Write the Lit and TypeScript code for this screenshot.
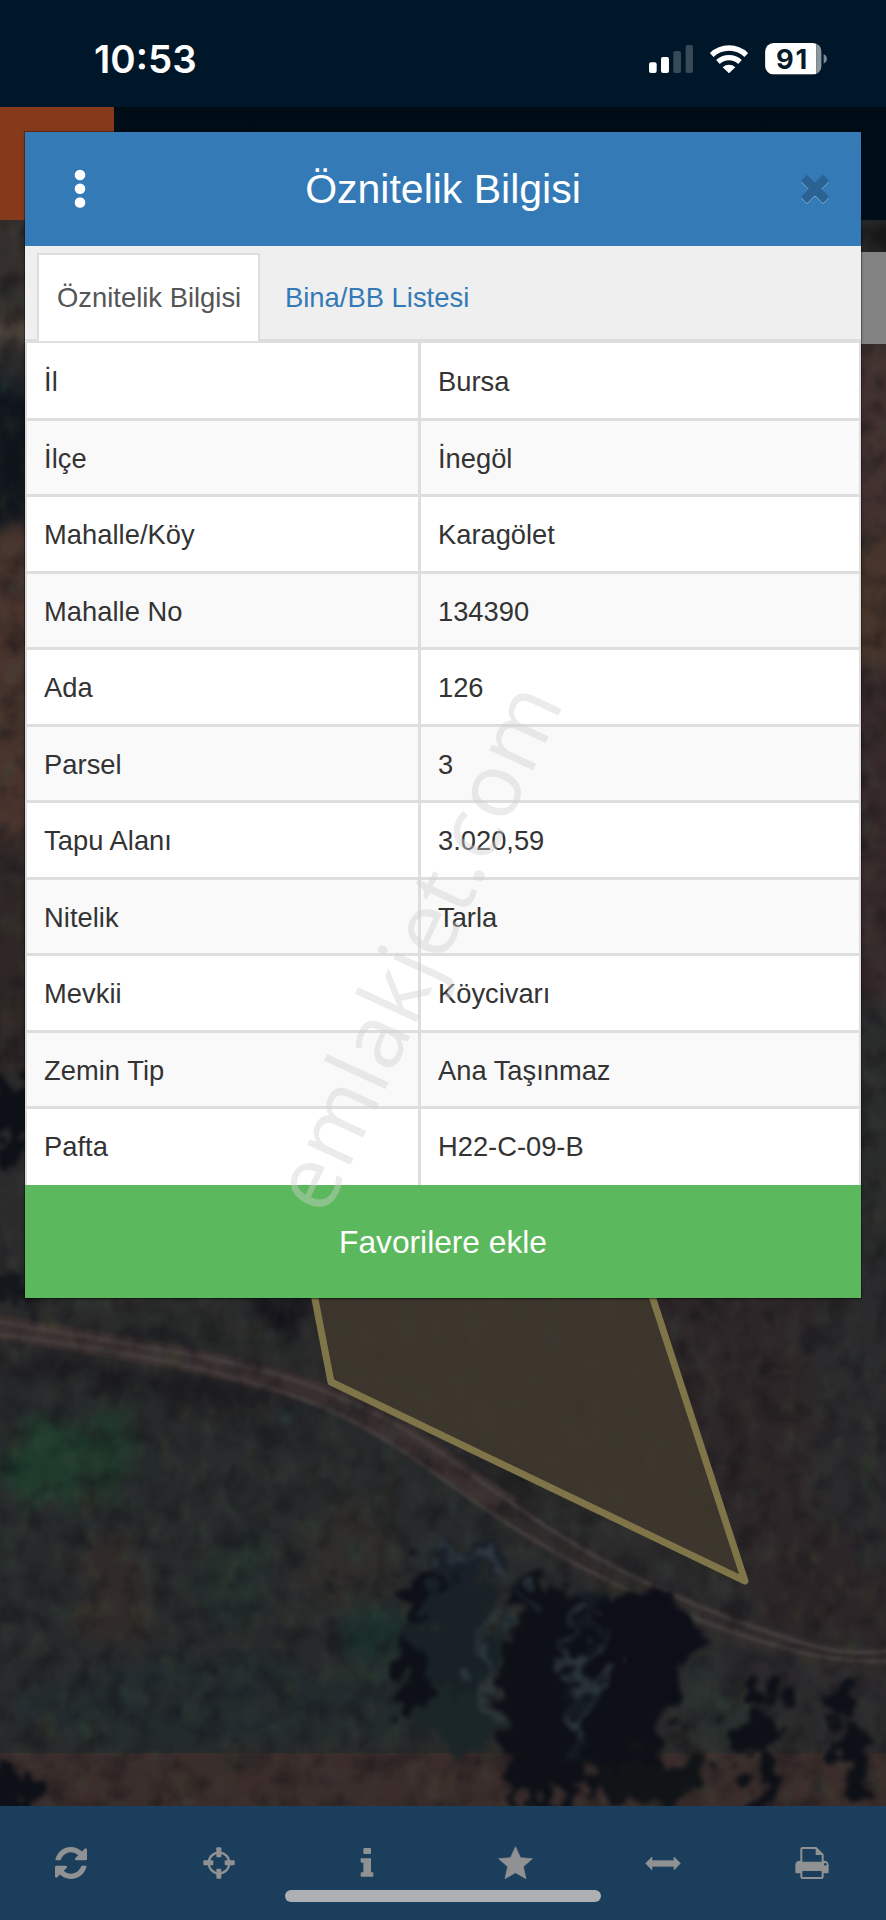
import { LitElement, html, css, svg } from 'lit';
import { customElement, property } from 'lit/decorators.js';

interface AttributeRow {
  label: string;
  value: string;
}

const ROWS: AttributeRow[] = [
  { label: 'İl', value: 'Bursa' },
  { label: 'İlçe', value: 'İnegöl' },
  { label: 'Mahalle/Köy', value: 'Karagölet' },
  { label: 'Mahalle No', value: '134390' },
  { label: 'Ada', value: '126' },
  { label: 'Parsel', value: '3' },
  { label: 'Tapu Alanı', value: '3.020,59' },
  { label: 'Nitelik', value: 'Tarla' },
  { label: 'Mevkii', value: 'Köycivarı' },
  { label: 'Zemin Tip', value: 'Ana Taşınmaz' },
  { label: 'Pafta', value: 'H22-C-09-B' },
];

@customElement('status-bar')
export class StatusBar extends LitElement {
  static styles = css`
    :host {
      display: flex;
      align-items: flex-start;
      justify-content: space-between;
      height: 107px;
      box-sizing: border-box;
      padding: 36px 59px 0 94px;
      background: #00172a;
      color: #fff;
      font-family: Inter, 'Liberation Sans', sans-serif;
    }
    .time {
      font-size: 38.5px;
      line-height: 46px;
      font-weight: 600;
      letter-spacing: 0;
    }
    .icons {
      display: flex;
      align-items: center;
      gap: 17px;
      padding-top: 7px;
    }
    svg {
      display: block;
    }
    .signal {
      margin-top: 1px;
    }
    .battery {
      font-weight: 700;
      font-size: 82px;
    }
  `;

  render() {
    return html`
      <span class="time">10:53</span>
      <div class="icons">
        <svg class="signal" width="44.3" height="28" viewBox="0 0 133 84">
          <rect x="0" y="52" width="23" height="32" rx="6" fill="#fff" />
          <rect x="36" y="36" width="24" height="48" rx="6" fill="#fff" />
          <rect x="73" y="18" width="23" height="66" rx="6" fill="#384957" />
          <rect x="110" y="0" width="22" height="84" rx="6" fill="#384957" />
        </svg>
        <svg width="38" height="28.3" viewBox="0 0 114 85">
          <g fill="none" stroke="#fff" stroke-width="16">
            <path d="M5 30 A75 75 0 0 1 109 30" />
            <path d="M24 51 A48 48 0 0 1 90 51" />
          </g>
          <path d="M57 85 L38 67 A28 28 0 0 1 76 67 Z" fill="#fff" />
        </svg>
        <svg class="battery" width="62" height="31.6" viewBox="0 0 186 95">
          <defs>
            <clipPath id="cell"><rect width="170" height="95" rx="26" /></clipPath>
          </defs>
          <g clip-path="url(#cell)">
            <rect width="154" height="95" fill="#fff" />
            <rect x="154" width="16" height="95" fill="#8d979f" />
          </g>
          <path d="M176 33 Q186 38 186 48 Q186 58 176 62 Z" fill="#7c8892" />
          <text x="80" y="78" text-anchor="middle" textLength="94" fill="#061a2b">91</text>
        </svg>
      </div>
    `;
  }
}

@customElement('parcel-map')
export class ParcelMap extends LitElement {
  static styles = css`
    :host {
      display: block;
      position: relative;
      height: 1586px;
      overflow: hidden;
      background: #2b2b2c;
    }
    svg {
      display: block;
    }
    filter {
      color-interpolation-filters: sRGB;
    }
    .panel {
      position: absolute;
      top: 32px;
      right: 0;
      width: 60px;
      height: 92px;
      background: #838383;
    }
  `;

  private _fields() {
    return svg`
      <g filter="url(#soft)">
        <rect x="-30" y="190" width="90" height="170" fill="#342e2c" />
        <path d="M-20 325 L50 310 V345 L-20 355 Z" fill="#5c4f43" />
        <rect x="-20" y="375" width="70" height="150" fill="#10161d" />
        <rect x="-20" y="530" width="70" height="300" fill="#49342d" />
        <rect x="-20" y="830" width="70" height="250" fill="#2f2726" />
        <rect x="840" y="220" width="80" height="40" fill="#151515" />
        <rect x="840" y="340" width="80" height="190" fill="#42312f" />
        <rect x="840" y="530" width="80" height="130" fill="#47342a" />
        <rect x="840" y="660" width="80" height="340" fill="#37292a" />
        <rect x="840" y="1000" width="80" height="320" fill="#2a2b2b" />
        <path d="M630 1260 H920 V1670 L760 1620 Z" fill="#2d2628" />
        <path d="M800 1260 H920 V1600 L820 1520 Z" fill="#2a292b" />
        <path d="M-30 1350 L320 1400 L540 1540 L600 1640 V1760 H-30 Z" fill="#272a2b" />
        <ellipse cx="45" cy="1465" rx="42" ry="50" fill="#1f3b2c" />
        <ellipse cx="110" cy="1455" rx="24" ry="46" fill="#20382a" />
        <ellipse cx="235" cy="1580" rx="36" ry="38" fill="#232f2c" />
        <ellipse cx="115" cy="1590" rx="36" ry="60" fill="#302b29" />
        <ellipse cx="350" cy="1560" rx="50" ry="60" fill="#2e2d2b" />
        <ellipse cx="380" cy="1640" rx="34" ry="44" fill="#1d302d" />
        <ellipse cx="230" cy="1705" rx="210" ry="46" fill="#232b2d" />
        <ellipse cx="730" cy="1690" rx="50" ry="50" fill="#2a302f" />
        <path d="M690 1620 L920 1670 V1720 L720 1680 Z" fill="#2c2a2d" />
        <path d="M60 1305 L310 1300 L320 1370 L180 1345 Z" fill="#282a2a" />
        <ellipse cx="285" cy="1312" rx="34" ry="22" fill="#15141b" />
        <path d="M0 1355 L170 1372 L280 1402 L330 1440 L230 1410 L120 1390 L0 1370 Z" fill="#1c1b1f" />
        <path d="M470 1460 L540 1480 L500 1505 Z" fill="#18171a" />
      </g>`;
  }

  private _roads() {
    return svg`
      <g fill="none" filter="url(#lightSoft)">
        <path d="M-10 1325 C130 1350 230 1362 317 1394 S440 1462 510 1508" stroke="#3a2f2f" stroke-width="24" />
        <path d="M500 1505 C560 1555 640 1595 743 1630 S850 1656 896 1656" stroke="#302b2b" stroke-width="22" />
        <path d="M-10 1320 C130 1346 230 1355 317 1388 S440 1453 510 1502 S640 1585 743 1623 S850 1652 896 1651" stroke="#443d3d" stroke-width="4" />
        <path d="M-10 1333 C130 1352 230 1370 310 1402 S430 1472 490 1512 S620 1592 710 1624 S840 1664 896 1661" stroke="#433c3c" stroke-width="4" />
      </g>`;
  }

  private _trees() {
    return svg`
      <g filter="url(#ragged)" fill="#0d1017">
        <ellipse cx="430" cy="1590" rx="30" ry="32" />
        <ellipse cx="420" cy="1680" rx="28" ry="38" />
        <ellipse cx="470" cy="1560" rx="40" ry="20" fill="#1a2029" />
        <ellipse cx="460" cy="1640" rx="40" ry="60" fill="#182226" />
        <ellipse cx="460" cy="1720" rx="40" ry="30" fill="#1b2628" />
        <rect x="520" y="1590" width="120" height="190" rx="40" fill="#161c24" />
        <path d="M515 1575 L575 1590 L590 1640 L570 1700 L565 1770 L515 1770 L498 1690 L508 1630 Z" />
        <path d="M600 1592 L665 1590 L695 1640 L685 1700 L660 1750 L640 1806 L600 1800 L582 1720 L595 1670 Z" />
        <ellipse cx="645" cy="1650" rx="46" ry="56" fill="#0d0e18" />
        <ellipse cx="550" cy="1775" rx="42" ry="26" />
        <ellipse cx="650" cy="1780" rx="52" ry="26" fill="#101416" />
        <ellipse cx="760" cy="1690" rx="26" ry="16" />
        <ellipse cx="757" cy="1732" rx="26" ry="18" />
        <ellipse cx="764" cy="1780" rx="14" ry="30" />
        <ellipse cx="843" cy="1704" rx="26" ry="18" />
        <ellipse cx="850" cy="1750" rx="14" ry="27" />
        <ellipse cx="860" cy="1790" rx="13" ry="16" />
        <ellipse cx="8" cy="1790" rx="20" ry="30" />
        <ellipse cx="12" cy="1110" rx="30" ry="44" />
        <ellipse cx="10" cy="1290" rx="18" ry="22" fill="#14171b" />
      </g>
      <g filter="url(#ragged)" fill="none" stroke="#3a454c" stroke-width="7" opacity="0.7">
        <path d="M575 1610 L560 1660 L590 1690 L570 1740" />
        <path d="M610 1630 L590 1680" />
        <path d="M500 1610 L480 1660 L495 1720" />
        <path d="M440 1545 L500 1570 L530 1600" />
      </g>`;
  }

  render() {
    return html`
      <svg width="886" height="1586" viewBox="0 220 886 1586">
        <defs>
          <filter id="soft" x="-10%" y="-10%" width="120%" height="120%">
            <feTurbulence type="fractalNoise" baseFrequency="0.03" numOctaves="3" seed="4" result="n" />
            <feDisplacementMap in="SourceGraphic" in2="n" scale="60" xChannelSelector="R" yChannelSelector="G" />
            <feGaussianBlur stdDeviation="8" />
          </filter>
          <filter id="lightSoft">
            <feGaussianBlur stdDeviation="1.8" />
          </filter>
          <filter id="ragged" x="-10%" y="-10%" width="120%" height="120%">
            <feTurbulence type="fractalNoise" baseFrequency="0.04" numOctaves="4" seed="9" result="n" />
            <feDisplacementMap in="SourceGraphic" in2="n" scale="70" xChannelSelector="R" yChannelSelector="G" />
            <feGaussianBlur stdDeviation="2.5" />
          </filter>
          <filter id="darkGrain" x="0" y="0" width="100%" height="100%">
            <feTurbulence type="fractalNoise" baseFrequency="0.04" numOctaves="4" seed="2" />
            <feColorMatrix values="0 0 0 0 0.05  0 0 0 0 0.05  0 0 0 0 0.07  2.6 0 0 0 -1.15" />
            <feGaussianBlur stdDeviation="1" />
          </filter>
          <filter id="lightGrain" x="0" y="0" width="100%" height="100%">
            <feTurbulence type="fractalNoise" baseFrequency="0.05 0.035" numOctaves="4" seed="21" />
            <feColorMatrix values="0.3 0 0 0 0.14  0 0.3 0 0 0.13  0 0 0.3 0 0.12  0 1.8 0 0 -0.7" />
            <feGaussianBlur stdDeviation="1" />
          </filter>
        </defs>
        <rect y="220" width="886" height="1586" fill="#2b2b2c" />
        ${this._fields()} ${this._roads()}
        <rect y="1753" width="886" height="53" fill="#3a2d2b" />
        <rect y="220" width="886" height="1586" filter="url(#darkGrain)" opacity="0.4" />
        <rect y="220" width="886" height="1586" filter="url(#lightGrain)" opacity="0.25" />
        ${this._trees()}
        <path
          d="M290 1200 L315 1299 L331 1382 L745 1581 L653 1299 L620 1200 Z"
          fill="#40382e"
          fill-opacity="0.85"
          stroke="#7f7549"
          stroke-width="7"
          stroke-linejoin="round"
        />
      </svg>
      <div class="panel"></div>
    `;
  }
}

@customElement('map-toolbar')
export class MapToolbar extends LitElement {
  static styles = css`
    :host {
      display: grid;
      grid-template-columns: repeat(6, 1fr);
      position: relative;
      height: 114px;
      background: #1b3e5d;
    }
    .tool {
      display: flex;
      justify-content: center;
      align-items: center;
      height: 114px;
      padding: 0 5px 0 0;
      border: 0;
      background: none;
      color: #8f9193;
    }
    .tool:nth-child(n + 4) {
      padding-right: 3px;
    }
    .tool:last-of-type {
      padding-right: 0;
    }
    .home-indicator {
      position: absolute;
      left: 285px;
      top: 84px;
      width: 316px;
      height: 12px;
      border-radius: 6px;
      background: #aeb0b3;
    }
  `;

  render() {
    return html`
      <button class="tool" aria-label="Yenile">
        <svg width="32" height="32" viewBox="0 0 1536 1536" fill="currentColor">
          <path
            d="M1511 928q0 5-1 7-64 268-268 434.500t-478 166.500q-146 0-282.500-55t-243.500-157l-129 129q-19 19-45 19t-45-19-19-45v-448q0-26 19-45t45-19h448q26 0 45 19t19 45-19 45l-137 137q71 66 161 102t187 36q134 0 250-65t186-179q11-17 53-117 8-23 30-23h192q13 0 22.500 9.500t9.500 22.500zm25-800v448q0 26-19 45t-45 19h-448q-26 0-45-19t-19-45 19-45l138-138q-148-137-349-137-134 0-250 65t-186 179q-11 17-53 117-8 23-30 23h-199q-13 0-22.500-9.500t-9.500-22.500v-7q65-268 270-434.500t480-166.500q146 0 284 55.500t245 156.500l130-129q19-19 45-19t45 19 19 45z"
          />
        </svg>
      </button>
      <button class="tool" aria-label="Konum">
        <svg width="32" height="32" viewBox="0 0 96 96" fill="currentColor">
          <circle cx="48" cy="48" r="31" fill="none" stroke="currentColor" stroke-width="7" />
          <rect x="40" y="1" width="15" height="30" rx="3" />
          <rect x="40" y="65" width="15" height="30" rx="3" />
          <rect x="1" y="40" width="30" height="15" rx="3" />
          <rect x="65" y="40" width="30" height="15" rx="3" />
        </svg>
      </button>
      <button class="tool" aria-label="Bilgi">
        <svg width="14" height="32" viewBox="0 0 42 96" fill="currentColor">
          <rect x="10" y="3" width="23" height="18" rx="3" />
          <path d="M2 34 H33 V76 H38 Q40 76 40 79 V86 Q40 89 37 89 H5 Q2 89 2 86 V79 Q2 76 5 76 H10 V47 H5 Q2 47 2 44 Z" />
        </svg>
      </button>
      <button class="tool" aria-label="Favoriler">
        <svg width="35" height="34" viewBox="0 0 105 102" fill="currentColor" stroke="currentColor" stroke-width="2" stroke-linejoin="round">
          <path d="M52.500 2 L67.500 35 L103 38 L76 62 L84 98 L52.500 80 L21 98 L29 62 L2 38 L37.500 35 Z" />
        </svg>
      </button>
      <button class="tool" aria-label="Ölç">
        <svg width="36" height="15" viewBox="0 0 108 45" fill="currentColor" stroke="currentColor" stroke-width="2" stroke-linejoin="round">
          <path d="M2 22 L21 3 V14 H87 V3 L106 22 L87 42 V31 H21 V42 Z" />
        </svg>
      </button>
      <button class="tool" aria-label="Yazdır">
        <svg width="34" height="32" viewBox="0 0 102 96" fill="currentColor">
          <path d="M1 55 Q1 41 15 41 H87 Q101 41 101 55 V76 Q101 79 98 79 H4 Q1 79 1 76 Z" />
          <path d="M19 47 V6 Q19 3 22 3 H63 L83 23 V47 Z" fill="#1b3e5d" stroke="currentColor" stroke-width="6" />
          <path d="M62 3 V24 H83" fill="currentColor" />
          <rect x="19" y="69" width="64" height="24" rx="3" fill="#1b3e5d" stroke="currentColor" stroke-width="6" />
          <circle cx="91" cy="52" r="4" fill="#1b3e5d" />
        </svg>
      </button>
      <div class="home-indicator"></div>
    `;
  }
}

@customElement('attribute-dialog')
export class AttributeDialog extends LitElement {
  @property({ type: Array })
  rows: AttributeRow[] = [];

  static styles = css`
    :host {
      display: block;
      font-family: 'Liberation Sans', Arial, sans-serif;
      color: #333;
      background: #fff;
      box-shadow: 0 0 0 1px rgba(0, 0, 0, 0.25), 0 1px 3px rgba(0, 0, 0, 0.35);
    }
    header {
      display: grid;
      grid-template-columns: 110px 1fr 110px;
      align-items: center;
      height: 114px;
      background: #337ab7;
      color: #fff;
    }
    h4 {
      margin: 0;
      font-size: 41px;
      font-weight: 400;
      line-height: 48px;
      text-align: center;
      white-space: nowrap;
    }
    .menu,
    .close {
      display: flex;
      justify-content: center;
      padding: 0;
      border: 0;
      background: none;
    }
    .close {
      padding-left: 18px;
    }
    .close svg {
      filter: drop-shadow(0 1.5px 0 rgba(255, 255, 255, 0.35));
    }
    .tabs {
      display: flex;
      height: 95px;
      box-sizing: border-box;
      padding: 7px 0 0 12px;
      border-bottom: 2px solid #ddd;
      background: #efefef;
    }
    .tab {
      box-sizing: border-box;
      height: 86px;
      padding: 0 18px;
      border: 2px solid transparent;
      border-bottom: 0;
      font-size: 27.4px;
      line-height: 86px;
      color: #337ab7;
      white-space: nowrap;
    }
    .tab.active {
      width: 223px;
      height: 88px;
      margin-right: 5px;
      background: #fff;
      border-color: #ddd;
      color: #555;
    }
    .table {
      border: 2px solid #ddd;
      border-bottom: 0;
      border-top: 0;
      height: 843.5px;
      box-sizing: border-box;
      display: grid;
      grid-template-rows: repeat(10, 76.5px) 1fr;
    }
    .row {
      display: grid;
      grid-template-columns: 391px 1fr;
      border-top: 3px solid #dedede;
      font-size: 27.3px;
      line-height: 75px;
      letter-spacing: 0.05px;
    }
    .row:first-child {
      border-top-width: 2px;
      line-height: 77px;
    }
    .row:nth-child(even) {
      background: #f9f9f9;
    }
    .row span {
      padding-left: 17px;
    }
    .row span + span {
      padding-left: 17px;
      border-left: 3px solid #dedede;
      letter-spacing: 0;
    }
    .favorite {
      display: block;
      width: 100%;
      height: 113.5px;
      padding: 3px 0 0;
      border: 0;
      background: #5cb85c;
      color: #fff;
      font: 31.7px 'Liberation Sans', Arial, sans-serif;
    }
  `;

  render() {
    return html`
      <header>
        <button class="menu" aria-label="Menü">
          <svg width="12" height="40" viewBox="0 0 12 40" fill="#fff">
            <circle cx="6" cy="6" r="5.300" />
            <circle cx="6" cy="19.800" r="5.300" />
            <circle cx="6" cy="33.500" r="5.300" />
          </svg>
        </button>
        <h4>Öznitelik Bilgisi</h4>
        <button class="close" aria-label="Kapat">
          <svg width="28" height="28" viewBox="0 0 84 84">
            <path
              d="M18 2 L42 26 L66 2 L82 18 L58 42 L82 66 L66 82 L42 58 L18 82 L2 66 L26 42 L2 18 Z"
              fill="#2a6393"
              stroke="#2a6393"
              stroke-width="4"
              stroke-linejoin="round"
            />
          </svg>
        </button>
      </header>
      <nav class="tabs">
        <div class="tab active">Öznitelik Bilgisi</div>
        <div class="tab">Bina/BB Listesi</div>
      </nav>
      <div class="table">
        ${this.rows.map(
          (row) => html`<div class="row"><span>${row.label}</span><span>${row.value}</span></div>`
        )}
      </div>
      <button class="favorite">Favorilere ekle</button>
    `;
  }
}

@customElement('app-root')
export class AppRoot extends LitElement {
  static styles = css`
    :host {
      display: block;
      position: relative;
      width: 886px;
      height: 1920px;
      overflow: hidden;
    }
    .app-header {
      height: 113px;
      background: linear-gradient(#000d16, #000e1a);
    }
    .logo {
      width: 114px;
      height: 113px;
      background: #853a1b;
    }
    attribute-dialog {
      position: absolute;
      top: 132px;
      left: 25px;
      width: 836px;
    }
    .watermark {
      position: absolute;
      inset: 0;
      pointer-events: none;
      font-family: 'Open Sans', 'Noto Sans', sans-serif;
      font-size: 89px;
    }
  `;

  render() {
    return html`
      <status-bar></status-bar>
      <div class="app-header"><div class="logo"></div></div>
      <parcel-map></parcel-map>
      <map-toolbar></map-toolbar>
      <attribute-dialog .rows=${ROWS}></attribute-dialog>
      <svg class="watermark" width="886" height="1920" viewBox="0 0 886 1920">
        <text
          transform="translate(326 1218) rotate(-65.200)"
          textLength="568"
          fill="#cfcfcf"
          fill-opacity="0.42"
        >emlakjet.com</text>
      </svg>
    `;
  }
}
